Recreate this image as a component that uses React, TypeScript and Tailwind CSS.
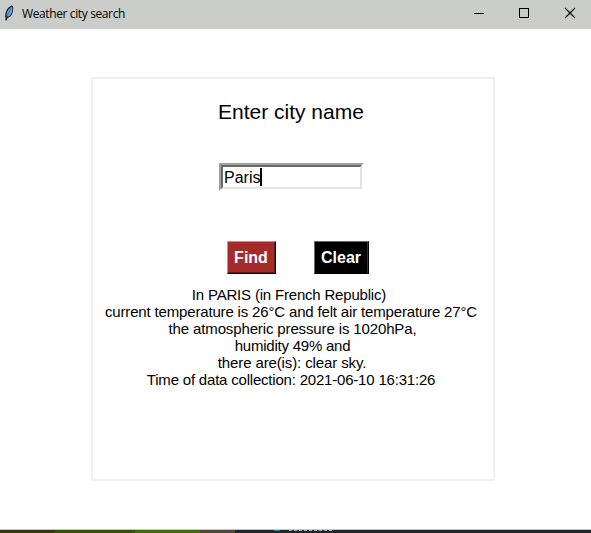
import React from "react";

const report = [
  { text: "In PARIS (in French Republic)", style: "pr-[4px] tracking-[-0.19px]" },
  { text: "current temperature is 26°C and felt air temperature 27°C", style: "tracking-[-0.165px]" },
  { text: "the atmospheric pressure is 1020hPa,", style: "pl-[3px] tracking-[-0.13px]" },
  { text: "humidity 49% and", style: "pl-[3px] tracking-[-0.22px]" },
  { text: "there are(is): clear sky.", style: "pl-[2px] tracking-[-0.12px]" },
  { text: "Time of data collection: 2021-06-10 16:31:26", style: "tracking-[-0.2px]" },
];

function TitleBar() {
  return (
    <header className="flex h-[29px] shrink-0 items-start bg-[#cbcdca]">
      <svg className="ml-[4px] mt-[5px] h-4 w-3" viewBox="0 0 12 16">
        <path d="M1.2 15.5 L1.6 12.8 C0.2 9 2.6 2.6 7.6 0.5 C10 0.4 9.8 6.5 7 11 L3.7 13 L2.5 15.5 Z" fill="#15202c" />
        <path d="M2.6 10.8 C2.2 7.5 4.4 3.6 7.8 1.4 C9 3 8.3 7.2 6 10.4 L3.8 11.8 Z" fill="#6aa5e6" />
        <path d="M2.6 13 C3.6 9.6 5.2 6 7.8 2.2" stroke="#2c4f78" strokeWidth="0.6" fill="none" />
      </svg>
      <h1 className="ml-[6px] mt-[6px] w-[110px] whitespace-nowrap font-['Open_Sans',sans-serif] text-[12px] leading-4 tracking-[-0.38px] text-black">
        Weather city search
      </h1>
      <svg className="ml-auto h-[29px] w-[141px]" viewBox="0 0 141 29" shapeRendering="crispEdges">
        <path d="M24 13.5H34" stroke="#000" />
        <rect x="69.5" y="8.5" width="9" height="9" stroke="#000" fill="none" />
        <path d="M115 8L125 18M125 8L115 18" stroke="#000" shapeRendering="auto" strokeWidth="1.1" />
      </svg>
    </header>
  );
}

export default function App() {
  return (
    <div className="flex h-[533px] w-[591px] flex-col overflow-hidden bg-white font-['Liberation_Sans',Arial,sans-serif] text-black">
      <TitleBar />
      <main className="flex-1 pl-[91px] pt-[48px]">
        <section className="flex h-[404px] w-[404px] flex-col border-2 border-[#f0f0f0]">
          <h2 className="ml-[125px] mt-[21px] whitespace-nowrap text-[21px] leading-6">Enter city name</h2>
          <div className="ml-[126px] mt-[39px] h-[28px] w-[145px] border-2 border-b-white border-l-[#a0a0a0] border-r-white border-t-[#a0a0a0]">
            <div className="flex h-full items-center border-2 border-b-[#e3e3e3] border-l-[#696969] border-r-[#e3e3e3] border-t-[#696969] pl-px">
              <span className="pt-[2px] text-[16px] leading-5">Paris</span>
              <span className="h-[18px] w-[2px] bg-black" />
            </div>
          </div>
          <div className="mt-[50px] flex gap-[38px] pl-[134px] text-[16px] font-bold text-white">
            <button className="h-[33px] w-[49px] border border-b-black border-l-[#d28a8a] border-r-black border-t-[#d28a8a] bg-[#a52a2a] pr-px shadow-[inset_-1px_-1px_0_#631919]">
              Find
            </button>
            <button className="h-[33px] w-[55px] border border-b-black border-l-[#696969] border-r-black border-t-[#696969] bg-black pr-px shadow-[inset_-1px_0_0_#333]">
              Clear
            </button>
          </div>
          <div className="mt-[12px] w-[396px] text-center text-[15px] leading-[17px]">
            {report.map((line) => (
              <p key={line.text} className={`whitespace-nowrap ${line.style}`}>{line.text}</p>
            ))}
          </div>
        </section>
      </main>
      <footer className="flex h-1 shrink-0 border-t border-[#c5c7c4] bg-[#222526]">
        <div className="w-[55px] bg-[#34360f]" />
        <div className="w-[80px] bg-[#365010]" />
        <div className="w-[65px] bg-[#426a08]" />
        <div className="w-[35px] bg-[#4c4a36]" />
        <div className="ml-[39px] h-px w-[6px] bg-[#377da5]" />
        <div className="ml-[9px] h-px w-[45px] bg-[repeating-linear-gradient(90deg,#b0b0b0_0_3px,#222526_3px_5px)]" />
      </footer>
    </div>
  );
}
